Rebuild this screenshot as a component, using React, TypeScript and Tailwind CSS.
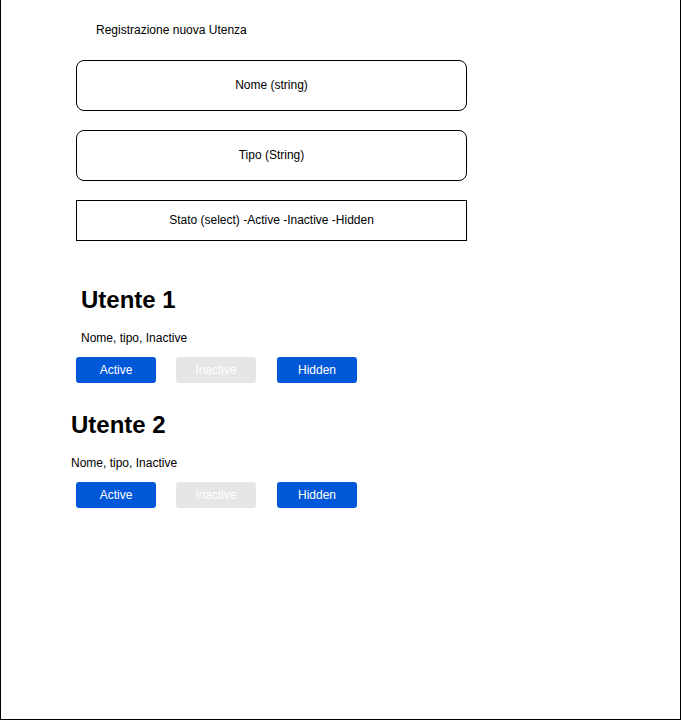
const font = { fontFamily: '"Liberation Sans", Arial, Helvetica, sans-serif' }

function Field({ label, rounded }: { label: string; rounded?: boolean }) {
  return (
    <div
      className={`w-[391px] flex items-center justify-center border border-black pb-[2px] text-[12px] leading-[14px] text-black ${
        rounded ? 'h-[51px] rounded-lg' : 'h-[41px]'
      }`}
    >
      {label}
    </div>
  )
}

function StatusButtons() {
  return (
    <div className="flex pl-[75px] mt-[12px] text-[12px] leading-[14px] text-white">
      <button className="w-[80px] h-[26px] rounded-[3px] bg-[#0057d8]">Active</button>
      <button className="w-[80px] h-[26px] ml-[20px] rounded-[3px] bg-[#e6e6e6]">Inactive</button>
      <button className="w-[80px] h-[26px] ml-[21px] rounded-[3px] bg-[#0057d8]">Hidden</button>
    </div>
  )
}

function Utente({ name, indent, first }: { name: string; indent: string; first?: boolean }) {
  return (
    <div className={first ? 'mt-[45px]' : 'mt-[28px]'}>
      <h2 className={`${indent} text-[24px] leading-[28px] font-bold text-black`}>{name}</h2>
      <p className={`${indent} mt-[17px] text-[12px] leading-[14px] text-black`}>Nome, tipo, Inactive</p>
      <StatusButtons />
    </div>
  )
}

export default function App() {
  return (
    <div className="w-[681px] h-[720px] bg-white border-l border-r border-b border-black" style={font}>
      <div className="flex flex-col">
        <div className="pl-[75px]">
          <p className="ml-[20px] mt-[23px] text-[12px] leading-[14px] text-black">Registrazione nuova Utenza</p>
          <div className="mt-[23px]">
            <Field label="Nome (string)" rounded />
          </div>
          <div className="mt-[19px]">
            <Field label="Tipo (String)" rounded />
          </div>
          <div className="mt-[19px]">
            <Field label="Stato (select) -Active -Inactive -Hidden" />
          </div>
        </div>
        <Utente name="Utente 1" indent="pl-[80px]" first />
        <Utente name="Utente 2" indent="pl-[70px]" />
      </div>
    </div>
  )
}
